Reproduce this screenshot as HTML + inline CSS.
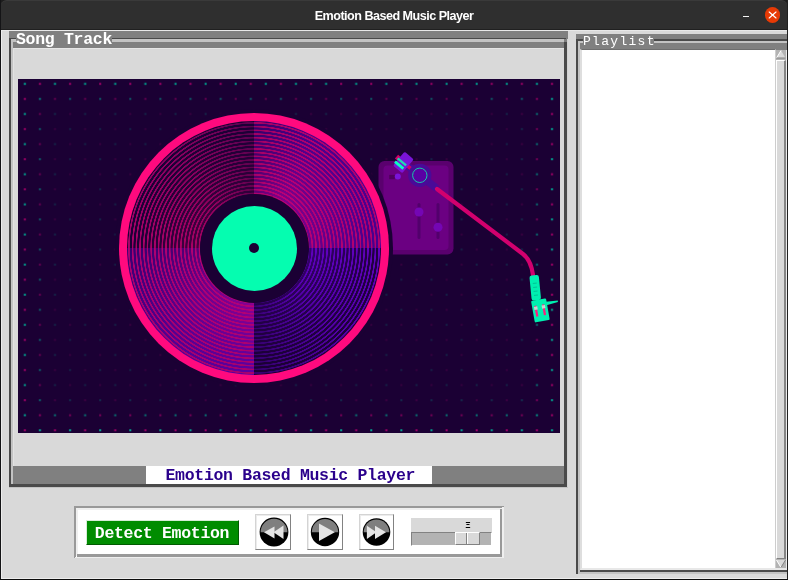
<!DOCTYPE html>
<html>
<head>
<meta charset="utf-8">
<title>Emotion Based Music Player</title>
<style>
*{box-sizing:border-box;margin:0;padding:0}
html,body{width:788px;height:580px;overflow:hidden;background:#000}
body{position:relative;font-family:"Liberation Mono",monospace}
.abs{position:absolute}
#win{position:absolute;left:0;top:0;width:788px;height:580px;background:#d9d9d9;overflow:hidden}
#edgeL{left:0;top:0;width:1px;height:580px;background:#141416}
#edgeR{left:787px;top:0;width:1px;height:580px;background:#202020}
#edgeB{left:0;top:579px;width:788px;height:1px;background:#0c0c0c}
#titlebar{left:0;top:0;width:788px;height:30px;background:#2f2f2f;border-radius:7px 7px 0 0;border-top:1px solid #3a3a3a;border-bottom:1px solid #202020}
#title{left:0;top:0;width:788px;height:30px;line-height:30px;text-align:center;color:#fff;font-family:"Liberation Sans",sans-serif;font-weight:bold;font-size:12.6px;letter-spacing:-0.52px;padding-top:1px}
#hl{left:1px;top:30px;width:786px;height:1px;background:#e8e8e8}
#min{left:742.8px;top:15.8px;width:6.6px;height:1.4px;background:#f4f4f4}
#close{left:764.8px;top:7.4px;width:15.4px;height:15.2px;border-radius:50%;background:#e73a05}
/* track frame */
#track{left:9px;top:31px;width:559px;height:457px;background:#808080}
.dk{background:#4a4a4a}
.lt{background:#c3c3c3}
#trackin{left:13px;top:48px;width:551px;height:418px;background:#d9d9d9;border-top:1px solid #e6e6e6;border-left:1px solid #e2e2e2}
.tk{font-weight:bold;white-space:pre}
.tk span,#title,#sval{will-change:transform}
#songtrack{left:16px;top:31px;width:96px;height:17px;line-height:17px;font-size:16.5px;letter-spacing:-0.3px;color:#fff;background:#808080;padding-left:1px;overflow:hidden}
#songtrack span{position:relative;top:0px;left:-1px}
#status span{position:relative;top:1px;left:1.3px}
#status{left:146px;top:466px;width:286px;height:18px;background:#fff;color:#2a008c;font-size:16.5px;letter-spacing:-0.3px;line-height:18px;text-align:center;overflow:hidden}
/* playlist */
#plist{left:576px;top:34px;width:212px;height:540px;background:#808080}
#listbox{left:580px;top:49px;width:196px;height:521px;background:#fff;border-top:1px solid #6e6e6e;border-left:2px solid #dedede;border-bottom:2px solid #e8e8e8;border-right:1px solid #e4e4e4}
#pltext{left:583px;top:34px;width:71px;height:15px;line-height:15px;font-size:13px;letter-spacing:1.3px;color:#fff;background:#808080;font-weight:normal;padding-left:1px;overflow:hidden}
#pltext span{position:relative;top:0px;left:-1px}
#sb{left:775px;top:50px;width:12px;height:518px;background:#b3b3b3}
#sbs{left:776px;top:60px;width:10px;height:499px;background:#d9d9d9;border-left:1px solid #fff;border-top:1px solid #fff;border-right:2px solid #858585;border-bottom:1px solid #828282}
/* controls */
#ctrl{left:74px;top:506px;width:430px;height:52px;background:#fff}
.g{background:#999}
.l{background:#efefef}
#detect span{position:relative;top:0.5px;left:-0.5px}
#detect{left:86px;top:520px;width:153px;height:25px;background:#008c00;color:#fff;font-size:16.5px;letter-spacing:-0.3px;line-height:23px;text-align:center;border:1px solid;border-color:#d6ecd6 #005a00 #005a00 #d6ecd6;overflow:hidden}
.mb{top:514px;width:36px;height:36px;background:#fff;border:1px solid;border-color:#d4d4d4 #828282 #828282 #d4d4d4;box-shadow:inset 1px 1px 0 #ececec}
.mb svg{position:absolute;left:0;top:0}
#scale{left:411px;top:518px;width:81px;height:28px;background:#d9d9d9}
#trough{left:411px;top:532px;width:81px;height:14px;background:#b3b3b3;border:1px solid;border-color:#828282 #fff #fff #828282}
#slider{left:455px;top:532px;width:25px;height:13px;background:#d9d9d9;border:1px solid;border-color:#fff #828282 #828282 #fff}
#slmid{left:466px;top:533px;width:1px;height:11px;background:#828282}
#slmid2{left:467px;top:533px;width:1px;height:11px;background:#fff}
#sval{left:461.5px;top:520px;width:12px;height:12px;font-size:9px;line-height:12px;text-align:center;color:#000;font-weight:bold;font-family:"Liberation Mono",monospace}
#art{left:18px;top:79px;width:542px;height:354px;background:#1b0034;overflow:hidden}
.c{border-radius:50%}
#recshadow,#recring,#gaps,#lines,#darkring,#label,#hole{border-radius:50%}
#recshadow{left:97.2px;top:30.1px;width:278px;height:278px;background:#1b0034}
#recring{left:101.2px;top:34.1px;width:270px;height:270px;background:#ff0a7e}
#gaps{left:109.4px;top:42.3px;width:253.6px;height:253.6px;
 background:conic-gradient(from 0deg,#36006a 0deg,#4a008c 28deg,#4c0090 55deg,#46008e 90deg,#200042 90deg,#1d003a 135deg,#1b0034 180deg,#5c00a0 180deg,#500092 225deg,#380070 270deg,#1c0036 270deg,#1c0036 360deg)}
#lines{left:109.4px;top:42.3px;width:253.6px;height:253.6px;
 background:conic-gradient(from 0deg,#a20062 0deg,#b4006c 28deg,#b00070 90deg,#6000bc 90deg,#5400a8 135deg,#34006c 180deg,#a8006c 180deg,#ac0070 270deg,#a80068 270deg,#8c0060 320deg,#5c0050 360deg);
 -webkit-mask-image:repeating-radial-gradient(circle at center,transparent 0,transparent 1.65px,#000 2.1px,#000 3.25px,transparent 3.7px,transparent 3.71px);
 mask-image:repeating-radial-gradient(circle at center,transparent 0,transparent 1.65px,#000 2.1px,#000 3.25px,transparent 3.7px,transparent 3.71px)}
#glow{left:109.4px;top:42.3px;width:253.6px;height:253.6px;border-radius:50%;
 background:conic-gradient(from 0deg,rgba(200,0,130,0.28) 0deg,rgba(200,0,130,0.46) 30deg,rgba(200,0,130,0.26) 90deg,rgba(96,0,200,0.34) 90deg,rgba(80,0,170,0.2) 180deg,rgba(200,0,130,0.44) 180deg,rgba(200,0,130,0.2) 270deg,rgba(170,0,90,0.3) 270deg,rgba(150,0,80,0.16) 360deg);
 -webkit-mask-image:radial-gradient(circle at center,#000 54px,rgba(0,0,0,.5) 85px,transparent 120px);
 mask-image:radial-gradient(circle at center,#000 54px,rgba(0,0,0,.5) 85px,transparent 120px)}
#darkring{left:181.7px;top:114.6px;width:109px;height:109px;background:#1b0034}
#label{left:193.7px;top:126.6px;width:85px;height:85px;background:#05fdb0}
#hole{left:231.2px;top:164.1px;width:10px;height:10px;background:#1b0034}
</style>
</head>
<body>
<div id="win">
  <div class="abs" style="left:0;top:0;width:788px;height:12px;background:#1d1d1d"></div>
  <div class="abs" id="titlebar"></div>
  <div class="abs" id="title">Emotion Based Music Player</div>
  <div class="abs" id="min"></div>
  <div class="abs" id="close"></div>
  <svg class="abs" style="left:764px;top:7px" width="17" height="16"><path d="M5.2 5 L12 11 M12 5 L5.2 11" stroke="#fff" stroke-width="1.15" stroke-linecap="round"/></svg>
  <div class="abs" id="hl"></div>

  <div class="abs" id="track"></div>
  <!-- track groove -->
  <div class="abs dk" style="left:9px;top:38px;width:557px;height:1px"></div>
  <div class="abs lt" style="left:11px;top:39px;width:553px;height:3px"></div>
  <div class="abs dk" style="left:9px;top:38px;width:2px;height:450px"></div>
  <div class="abs lt" style="left:11px;top:39px;width:2px;height:447px"></div>
  <div class="abs dk" style="left:564px;top:42px;width:3px;height:445px"></div>
  <div class="abs" style="left:567px;top:39px;width:1px;height:449px;background:#d2d2d2"></div>
  <div class="abs" id="trackin"></div>
  <div class="abs" style="left:13px;top:466px;width:551px;height:18px;background:#808080"></div>
  <div class="abs dk" style="left:11px;top:484px;width:555px;height:3px"></div>
  <div class="abs lt" style="left:9px;top:487px;width:559px;height:1px"></div>
  <div class="abs tk" id="songtrack"><span>Song Track</span></div>
  <div class="abs" id="art">
    <svg class="abs" id="dots" width="542" height="354" style="left:0;top:0">
      <defs>
        <pattern id="dp" x="-0.6" y="-2.6" width="30.12" height="30.12" patternUnits="userSpaceOnUse">
          <rect x="6.5" y="6.5" width="2" height="2" fill="#00a892"/>
          <rect x="21.56" y="6.5" width="2" height="2" fill="#a40068"/>
          <rect x="6.5" y="21.56" width="2" height="2" fill="#a40068"/>
          <rect x="21.56" y="21.56" width="2" height="2" fill="#00a892"/>
        </pattern>
        <filter id="blur" x="-20%" y="-20%" width="140%" height="140%"><feGaussianBlur stdDeviation="9"/></filter>
        <mask id="dm" maskUnits="userSpaceOnUse" x="0" y="0" width="542" height="354"><rect width="542" height="354" fill="#fff"/><rect x="20" y="18" width="498" height="316" fill="#000" opacity="0.8" filter="url(#blur)"/></mask>
      </defs>
      <rect width="542" height="354" fill="url(#dp)" mask="url(#dm)"/>
      <!-- mixer panel -->
      <rect x="360.5" y="82" width="75" height="93.5" rx="6" fill="#5a006e"/>
      <rect x="365.5" y="86.5" width="65" height="84.5" rx="4" fill="#6b0082"/>
      <rect x="399.5" y="124" width="3" height="36" rx="1.5" fill="#52006c"/>
      <rect x="418.5" y="124" width="3" height="36" rx="1.5" fill="#52006c"/>
      <circle cx="401" cy="133" r="4.5" fill="#7406b4"/>
      <circle cx="420" cy="148.3" r="4.5" fill="#7406b4"/>
      <rect x="371.2" y="95.9" width="5.6" height="4.3" fill="#50005e"/>
      <circle cx="379.8" cy="97.6" r="3" fill="#7a14d8"/>
    </svg>
    <div class="abs" id="recshadow"></div>
    <div class="abs" id="recring"></div>
    <div class="abs" id="gaps"></div>
    <div class="abs" id="lines"></div>
    <div class="abs" id="glow"></div>
    <div class="abs" id="darkring"></div>
    <div class="abs" id="label"></div>
    <div class="abs" id="hole"></div>
    <svg class="abs" id="arm" width="542" height="354" style="left:0;top:0">
      <!-- pivot -->
      <path d="M392 89 L417 108" stroke="#4a0a98" stroke-width="7.5" stroke-linecap="round" fill="none"/>
      <path d="M389 86.6 L394 90.4" stroke="#d0006a" stroke-width="3.5" fill="none"/>
      <circle cx="401.8" cy="96.3" r="11.6" fill="#4a0a98"/>
      <circle cx="401.8" cy="96.3" r="7.2" fill="#5a00a4" stroke="#18c8aa" stroke-width="1"/>
      <!-- arm -->
      <path d="M419 110 L505 175 Q513 181 515 196" stroke="#d2006e" stroke-width="4.2" fill="none" stroke-linecap="round"/>
      <!-- counterweight -->
      <g transform="translate(385.4,83.4) rotate(40)">
        <rect x="-9" y="-2.5" width="4" height="5" fill="#d0006a"/>
        <rect x="-6" y="-9" width="12" height="18" rx="1.5" fill="#7a14d8"/>
        <rect x="-7" y="-0.6" width="11" height="2.4" fill="#22d8b4"/>
        <rect x="-7" y="3.4" width="11" height="2.8" fill="#0affc0"/>
      </g>
      <!-- headshell -->
      <g transform="translate(516,196.3) rotate(-5.6)">
        <rect x="-4.7" y="0" width="9.4" height="25" rx="2.2" fill="#00f0b0"/>
        <path d="M-2 8 L2 8 M-2 12 L2 12 M-2 16 L2 16 M-2 20 L2 20" stroke="#00b890" stroke-width="0.8"/>
      </g>
      <path d="M528 222.8 L539.8 221.6 L539.9 222.9 L528.5 226.2 Z" fill="#00f0b0"/>
      <g transform="translate(522.4,231.4) rotate(-10)">
        <rect x="-7.6" y="-11" width="15.2" height="22" rx="1.2" fill="#00f0b0"/>
        <rect x="-5.2" y="-5.5" width="2.2" height="11" fill="#ff1a80"/>
        <rect x="2.6" y="-5.5" width="2.2" height="11" fill="#ff1a80"/>
        <rect x="-5.8" y="-4.6" width="3.4" height="3.2" fill="#c8d4d0"/>
        <rect x="2" y="-4.6" width="3.4" height="3.2" fill="#c8d4d0"/>
      </g>
    </svg>
  </div>
  <div class="abs tk" id="status"><span>Emotion Based Music Player</span></div>

  <div class="abs" id="plist"></div>
  <div class="abs dk" style="left:576px;top:39px;width:212px;height:2px"></div>
  <div class="abs lt" style="left:578px;top:41px;width:210px;height:2px"></div>
  <div class="abs dk" style="left:576px;top:39px;width:2px;height:535px"></div>
  <div class="abs lt" style="left:578px;top:41px;width:2px;height:531px"></div>
  <div class="abs dk" style="left:580px;top:570px;width:208px;height:2px"></div>
  <div class="abs lt" style="left:578px;top:572px;width:210px;height:2px"></div>
  <div class="abs" id="listbox"></div>
  <div class="abs tk" id="pltext"><span>Playlist</span></div>
  <div class="abs" id="sb"></div>
  <div class="abs" id="sbs"></div>
  <div class="abs" style="left:775px;top:568px;width:12px;height:2px;background:#e8e8e8"></div>
  <div class="abs" style="left:786px;top:50px;width:1px;height:520px;background:#ececec"></div>
  <div class="abs" style="left:775px;top:50px;width:1px;height:518px;background:#cdcdcd"></div>
  <svg class="abs" style="left:775px;top:50px" width="12" height="9"><path d="M6 0.5 L10.5 8 L1.5 8 Z" fill="#d9d9d9"/><path d="M6 0.5 L1.5 8" stroke="#fff" stroke-width="1"/><path d="M1.5 8 L10.5 8" stroke="#828282" stroke-width="1"/></svg>
  <svg class="abs" style="left:775px;top:559px" width="12" height="9"><path d="M6 8.5 L10.5 1 L1.5 1 Z" fill="#d9d9d9"/><path d="M1.5 1 L6 8.5" stroke="#fff" stroke-width="1"/><path d="M10.5 1 L6 8.5" stroke="#828282" stroke-width="1"/></svg>

  <div class="abs" id="ctrl"></div>
  <div class="abs g" style="left:74px;top:506px;width:430px;height:2px"></div>
  <div class="abs g" style="left:74px;top:506px;width:2px;height:52px"></div>
  <div class="abs l" style="left:76px;top:508px;width:426px;height:2px"></div>
  <div class="abs l" style="left:76px;top:508px;width:2px;height:48px"></div>
  <div class="abs g" style="left:77px;top:554px;width:426px;height:3px"></div>
  <div class="abs g" style="left:500px;top:509px;width:2px;height:48px"></div>
  <div class="abs l" style="left:502px;top:507px;width:2px;height:51px"></div>
  <div class="abs l" style="left:75px;top:557px;width:429px;height:1px"></div>
  <div class="abs tk" id="detect"><span>Detect Emotion</span></div>
  <div class="abs mb" style="left:255px;width:36px"><svg width="34" height="34" viewBox="0 0 34 34">
    <circle cx="18" cy="17" r="14.4" fill="#000"/>
    <path d="M4.6 17.2 A13.4 13.4 0 0 1 31.4 17.2 Z" fill="#7f7f7f"/>
    <path d="M8 17.3 L18.5 11.5 L18.5 23.5 Z" fill="#e4e4e4"/><path d="M17.5 17.3 L27.5 10.5 L27.5 24 Z" fill="#e4e4e4"/></svg></div>
  <div class="abs mb" style="left:307px;width:36px"><svg width="34" height="34" viewBox="0 0 34 34">
    <circle cx="17" cy="17" r="14.2" fill="#000"/>
    <path d="M3.8000000000000007 17.2 A13.2 13.2 0 0 1 30.2 17.2 Z" fill="#7f7f7f"/>
    <path d="M11 8.5 L26.8 17.3 L11 26 Z" fill="#e4e4e4"/></svg></div>
  <div class="abs mb" style="left:359px;width:35px"><svg width="34" height="34" viewBox="0 0 34 34">
    <circle cx="16.5" cy="17" r="13.8" fill="#000"/>
    <path d="M3.6999999999999993 17.2 A12.8 12.8 0 0 1 29.3 17.2 Z" fill="#7f7f7f"/>
    <path d="M16.5 17.3 L6.9 10.8 L6.9 24 Z" fill="#e4e4e4"/><path d="M26 17.3 L15 10.8 L15 24 Z" fill="#e4e4e4"/></svg></div>
  <div class="abs" id="scale"></div>
  <div class="abs" id="trough"></div>
  <div class="abs" id="slider"></div>
  <div class="abs" id="slmid"></div>
  <div class="abs" id="slmid2"></div>
  <div class="abs" id="sval">&#926;</div>

  <div class="abs" style="left:1px;top:30px;width:1px;height:549px;background:#ededed"></div>
  <div class="abs" style="left:1px;top:578px;width:786px;height:1px;background:#ededed"></div>
  <div class="abs" id="edgeL"></div>
  <div class="abs" id="edgeR"></div>
  <div class="abs" id="edgeB"></div>
</div>
</body>
</html>
